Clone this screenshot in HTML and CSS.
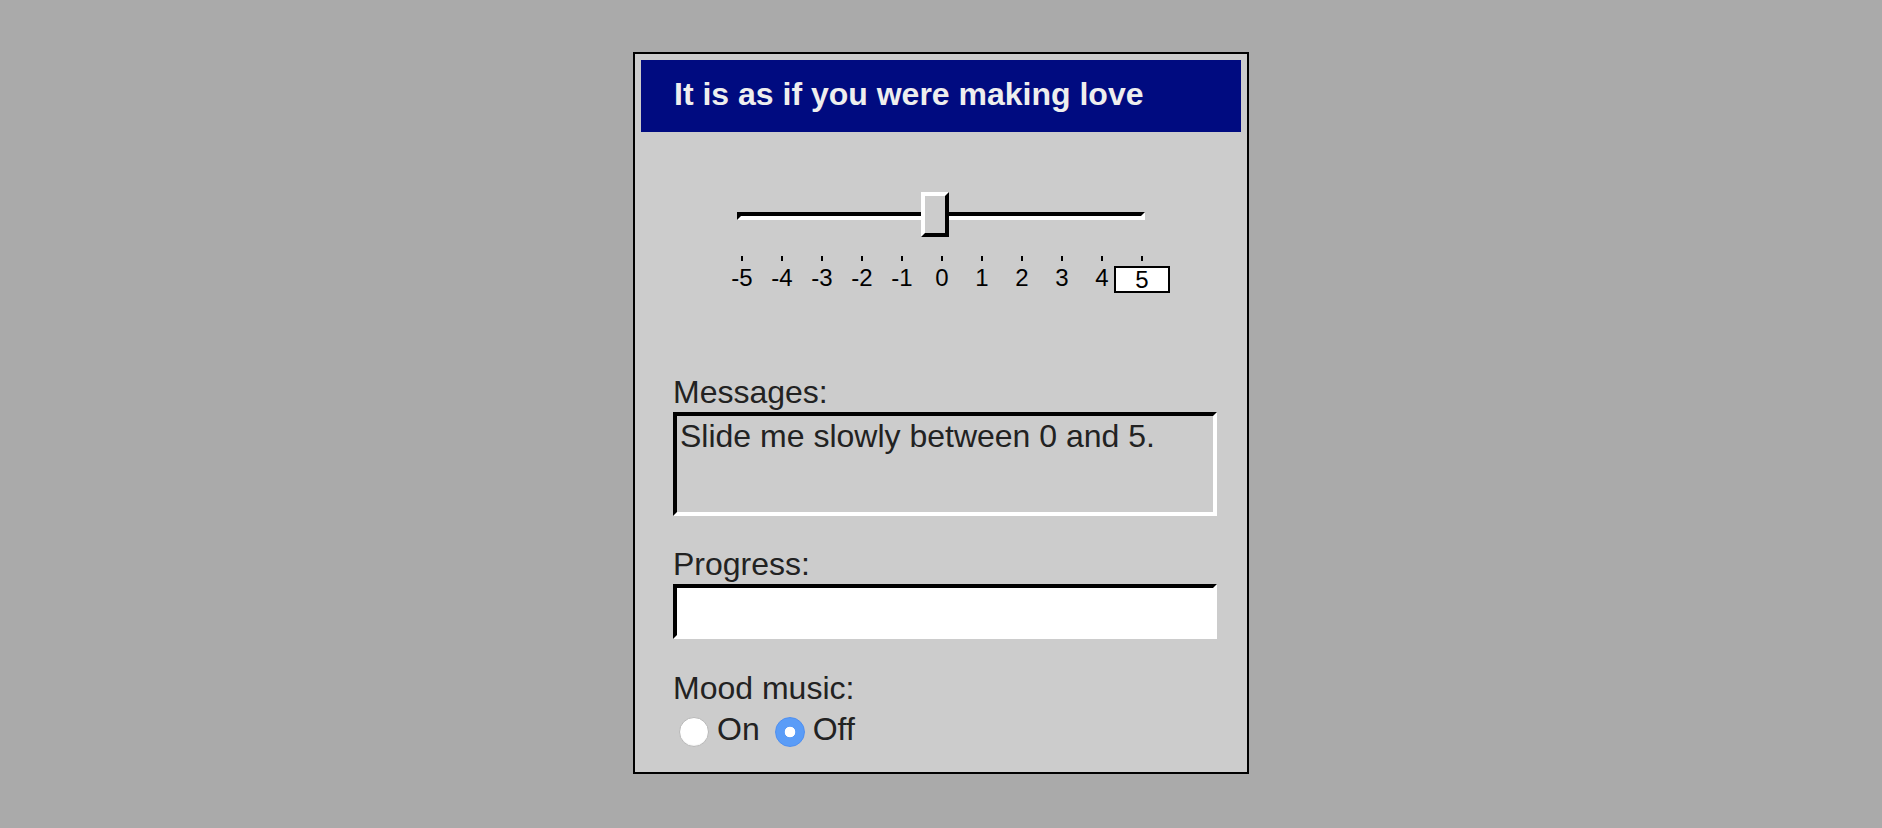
FILE: index.html
```html
<!DOCTYPE html>
<html lang="en">
<head>
<meta charset="utf-8">
<title>It is as if you were making love</title>
<link rel="stylesheet" href="styles.css">
</head>
<body>
<div class="panel">
  <div class="header">It is as if you were making love</div>
  <div class="slider">
    <div class="track"><div class="thumb"></div></div>
    <div class="scale">
      <div class="cell"><span class="tick"></span><span class="num">-5</span></div>
      <div class="cell"><span class="tick"></span><span class="num">-4</span></div>
      <div class="cell"><span class="tick"></span><span class="num">-3</span></div>
      <div class="cell"><span class="tick"></span><span class="num">-2</span></div>
      <div class="cell"><span class="tick"></span><span class="num">-1</span></div>
      <div class="cell"><span class="tick"></span><span class="num">0</span></div>
      <div class="cell"><span class="tick"></span><span class="num">1</span></div>
      <div class="cell"><span class="tick"></span><span class="num">2</span></div>
      <div class="cell"><span class="tick"></span><span class="num">3</span></div>
      <div class="cell"><span class="tick"></span><span class="num">4</span></div>
      <div class="cell"><span class="tick"></span><span class="num-box">5</span></div>
    </div>
  </div>
  <div class="form">
    <div class="label">Messages:</div>
    <div class="messages">Slide me slowly between 0 and 5.</div>
    <div class="label label-gap">Progress:</div>
    <div class="progress"></div>
    <div class="label label-gap2">Mood music:</div>
    <div class="radios">
      <span class="radio"></span><span class="radio-text">On</span>
      <span class="radio radio-on"></span><span class="radio-text">Off</span>
    </div>
  </div>
</div>
</body>
</html>
```
FILE: styles.css
```css
html, body {
  margin: 0;
  padding: 0;
}
body {
  background: #aaaaaa;
  font-family: "Liberation Sans", Arial, Helvetica, sans-serif;
}
.panel {
  width: 600px;
  margin: 52px auto 0;
  padding: 6px;
  border: 2px solid #000;
  background: #cccccc;
}
.header {
  height: 72px;
  box-sizing: border-box;
  background: #000b80;
  color: #eeeeee;
  font-weight: bold;
  font-size: 32px;
  line-height: 69px;
  padding: 0 0 3px 33px;
  white-space: nowrap;
}
.slider {
  width: 408px;
  margin: 80px auto 0;
}
.track {
  position: relative;
  box-sizing: border-box;
  width: 408px;
  height: 8px;
  border: 4px solid;
  border-color: #000 #fff #fff #000;
}
.thumb {
  position: absolute;
  left: 180px;
  top: -24px;
  box-sizing: border-box;
  width: 28px;
  height: 45px;
  border: 4px solid;
  border-color: #fff #000 #000 #fff;
  background: #cccccc;
}
.scale {
  display: flex;
  margin: 36px 0 0 -15px;
  color: #000;
  font-size: 24px;
}
.cell {
  width: 40px;
  display: flex;
  flex-direction: column;
  align-items: center;
  flex: none;
}
.tick {
  display: block;
  width: 2px;
  height: 5px;
  background: #000;
}
.num {
  display: block;
  margin-top: 3px;
  line-height: 27px;
  white-space: nowrap;
}
.num-box {
  display: block;
  flex: none;
  margin-top: 5px;
  box-sizing: border-box;
  width: 56px;
  height: 27px;
  border: 2px solid #000;
  background: #fff;
  text-align: center;
  line-height: 23px;
}
.form {
  margin-top: 81px;
  padding: 0 0 18px 32px;
  color: #222;
  font-size: 32px;
}
.label {
  line-height: 37px;
  margin-bottom: 1px;
}
.label-gap {
  margin-top: 30px;
}
.label-gap2 {
  margin-top: 31px;
  margin-bottom: 4px;
}
.messages {
  box-sizing: border-box;
  width: 544px;
  height: 104px;
  border: 4px solid;
  border-color: #000 #fff #fff #000;
  padding: 2px 3px;
  line-height: 37px;
}
.progress {
  box-sizing: border-box;
  width: 544px;
  height: 55px;
  border: 4px solid;
  border-color: #000 #fff #fff #000;
  background: #fff;
}
.radios {
  display: flex;
  align-items: center;
  line-height: 37px;
}
.radio {
  display: block;
  box-sizing: border-box;
  width: 30px;
  height: 30px;
  margin: 4px 8px 0 6px;
  border-radius: 50%;
  border: 1px solid #b8b8b8;
  background: #ffffff;
  box-shadow: inset 0 -1px 1px rgba(0, 0, 0, 0.06);
  flex: none;
}
.radio-on {
  margin-left: 15px;
  border-color: #4f8ff0;
  box-shadow: none;
  background: radial-gradient(circle, #ffffff 0 5px, #5a9cf7 5.6px);
}
.radio-text {
  display: block;
}
```
